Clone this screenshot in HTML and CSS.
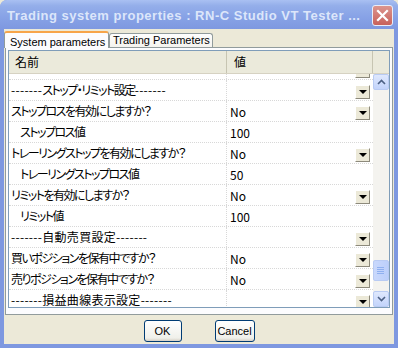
FILE: index.html
```html
<!DOCTYPE html>
<html lang="ja">
<head>
    <meta charset="UTF-8">
    <title>Trading system properties</title>
    <link rel="stylesheet" href="styles.css">
</head>
<body>
    <div class="window">
        <div class="titlebar">
            <span class="title">Trading system properties : RN-C Studio VT Tester ...</span>
            <span class="close">
                <svg width="13" height="13" viewBox="0 0 13 13"><path d="M2 2 L11 11 M11 2 L2 11" stroke="#fff" stroke-width="2.2" stroke-linecap="square"/></svg>
            </span>
        </div>
        <div class="client">
            <div class="tabs">
                <div class="tab active">System parameters</div>
                <div class="tab">Trading Parameters</div>
            </div>
            <div class="panel">
                <div class="grid">
                    <div class="head">
                        <div class="hcell name">名前</div>
                        <div class="hcell val">値</div>
                        <div class="hcell rest"></div>
                    </div>
                    <div class="gbody">
                        <div class="viewport">
                            <div class="rows">
                                <div class="row"><div class="cell name"></div><div class="cell val"><span class="drop"></span></div></div>
                                <div class="row"><div class="cell name"><span class="dash">-------</span>ストップ・リミット設定<span class="dash">-------</span></div><div class="cell val"><span class="drop"></span></div></div>
                                <div class="row"><div class="cell name">ストップロスを有効にしますか？</div><div class="cell val">No<span class="drop"></span></div></div>
                                <div class="row"><div class="cell name sub">ストップロス値</div><div class="cell val">100</div></div>
                                <div class="row"><div class="cell name">トレーリングストップを有効にしますか？</div><div class="cell val">No<span class="drop"></span></div></div>
                                <div class="row"><div class="cell name sub">トレーリングストップロス値</div><div class="cell val">50</div></div>
                                <div class="row"><div class="cell name">リミットを有効にしますか？</div><div class="cell val">No<span class="drop"></span></div></div>
                                <div class="row"><div class="cell name sub">リミット値</div><div class="cell val">100</div></div>
                                <div class="row"><div class="cell name"><span class="dash">-------</span><span class="kanji">自動売買設定</span><span class="dash">-------</span></div><div class="cell val"><span class="drop"></span></div></div>
                                <div class="row"><div class="cell name">買いポジションを保有中ですか？</div><div class="cell val">No<span class="drop"></span></div></div>
                                <div class="row"><div class="cell name">売りポジションを保有中ですか？</div><div class="cell val">No<span class="drop"></span></div></div>
                                <div class="row"><div class="cell name"><span class="dash">-------</span><span class="kanji">損益曲線表示設定</span><span class="dash">-------</span></div><div class="cell val"><span class="drop"></span></div></div>
                            </div>
                        </div>
                        <div class="scrollbar">
                            <div class="sbtn">
                                <svg width="9" height="6" viewBox="0 0 9 6"><path d="M1 5 L4.5 1.5 L8 5" fill="none" stroke="#4d6185" stroke-width="1.6"/></svg>
                            </div>
                            <div class="track">
                                <div class="thumb">
                                    <svg width="8" height="7" viewBox="0 0 8 7"><path d="M0 0.5 H7 M0 2.5 H7 M0 4.5 H7 M0 6.5 H7" stroke="#8fb0f0" stroke-width="1"/></svg>
                                </div>
                            </div>
                            <div class="sbtn">
                                <svg width="9" height="6" viewBox="0 0 9 6"><path d="M1 1 L4.5 4.5 L8 1" fill="none" stroke="#4d6185" stroke-width="1.6"/></svg>
                            </div>
                        </div>
                    </div>
                </div>
            </div>
            <div class="buttons">
                <button class="btn ok">OK</button>
                <button class="btn cancel">Cancel</button>
            </div>
        </div>
    </div>
</body>
</html>
```

FILE: styles.css
```css
body {
    margin: 0;
    width: 398px;
    height: 348px;
    overflow: hidden;
    background: #ece9d8;
    font-family: "Liberation Sans", Arial, sans-serif;
}

.window {
    width: 398px;
    height: 348px;
    display: flex;
    flex-direction: column;
    box-sizing: border-box;
    background: #7e98e0;
    border-radius: 7px 7px 0 0;
    overflow: hidden;
}

.titlebar {
    height: 29px;
    flex: none;
    display: flex;
    align-items: center;
    justify-content: space-between;
    padding: 0 5px 0 7px;
    background: linear-gradient(#a9c0f2 0%, #94aeea 20%, #87a2e6 60%, #7e98e0 100%);
}

.title {
    color: #dce6fa;
    font-weight: bold;
    font-size: 13px;
    letter-spacing: 0.5px;
    white-space: nowrap;
    margin-top: 1px;
}

.close {
    width: 19px;
    height: 19px;
    display: flex;
    align-items: center;
    justify-content: center;
    background: linear-gradient(#dc958e, #c8625b);
    border: 1px solid #e9eef9;
    border-radius: 3px;
    margin-top: 2px;
}

.client {
    flex: 1;
    margin: 0 4px 4px 4px;
    background: #ece9d8;
    display: flex;
    flex-direction: column;
}

.tabs {
    display: flex;
    align-items: flex-end;
    height: 17px;
    margin-top: 1px;
    position: relative;
    z-index: 1;
}

.tab {
    font-size: 11px;
    color: #000;
    height: 13px;
    line-height: 13px;
    padding: 0 2px 0 3px;
    border: 1px solid #919b9c;
    border-bottom: none;
    border-radius: 3px 3px 0 0;
    background: linear-gradient(#fefefe, #f4f3ee);
    white-space: nowrap;
}

.tab.active {
    height: 15px;
    line-height: 18px;
    padding: 0 6px 0 5px;
    width: 92px;
    background: #fcfcfe;
    border-top: 2px solid #f7a54a;
    margin-bottom: -1px;
}

.panel {
    height: 262px;
    margin: 0 1px;
    border: 1px solid #919b9c;
    background: #fcfcfe;
    padding: 2px;
}

.grid {
    border: 1px solid #7f9db9;
    height: 258px;
    box-sizing: border-box;
    display: flex;
    flex-direction: column;
    background: #fff;
}

.head {
    display: flex;
    height: 23px;
    flex: none;
    background: #ebeadb;
    border-bottom: 1px solid #d6d2c2;
    box-sizing: border-box;
}

.hcell {
    font-family: "Noto Sans CJK JP", sans-serif;
    font-size: 12px;
    line-height: 22px;
    box-sizing: border-box;
    border-right: 1px solid #c7c5b2;
}

.hcell.name {
    width: 218px;
    padding-left: 6px;
}

.hcell.val {
    width: 146px;
    padding-left: 7px;
}

.hcell.rest {
    flex: 1;
    border-right: none;
}

.gbody {
    flex: 1;
    display: flex;
    min-height: 0;
}

.viewport {
    flex: 1;
    overflow: hidden;
}

.rows {
    margin-top: -15px;
}

.row {
    display: flex;
    height: 21px;
    box-sizing: border-box;
    border-bottom: 1px dotted #d8d8d8;
}

.cell {
    font-family: "Noto Sans CJK JP", sans-serif;
    font-feature-settings: "palt";
    font-size: 12px;
    line-height: 19px;
    color: #000;
    white-space: nowrap;
    box-sizing: border-box;
}

.cell.name {
    width: 218px;
    padding-left: 2px;
    letter-spacing: -1.5px;
    border-right: 1px dotted #d8d8d8;
    overflow: hidden;
}

.cell.name.sub {
    padding-left: 11px;
}

.dash {
    letter-spacing: 0.3px;
}

.kanji {
    letter-spacing: 0.3px;
}

.cell.val {
    flex: 1;
    padding-left: 3px;
    display: flex;
    align-items: center;
    justify-content: space-between;
}

.drop {
    width: 15px;
    height: 14px;
    margin: 3px 3px 0 auto;
    box-sizing: border-box;
    border: 1px solid #fff;
    border-right-color: #8d8a7c;
    border-bottom-color: #8d8a7c;
    background: #ece9d8;
    display: flex;
    align-items: center;
    justify-content: center;
}

.drop::after {
    content: '';
    border-left: 4px solid transparent;
    border-right: 4px solid transparent;
    border-top: 4px solid #000;
    margin-top: 1px;
}

.scrollbar {
    width: 16px;
    flex: none;
    display: flex;
    flex-direction: column;
    background: #f4f3ef;
}

.sbtn {
    height: 16px;
    flex: none;
    box-sizing: border-box;
    border: 1px solid #b9cbf3;
    border-radius: 2px;
    background: linear-gradient(#dfe8fd, #c3d4fb);
    display: flex;
    align-items: center;
    justify-content: center;
}

.track {
    flex: 1;
    display: flex;
    flex-direction: column;
    justify-content: flex-end;
    padding-bottom: 10px;
}

.thumb {
    height: 21px;
    box-sizing: border-box;
    border: 1px solid #b9cbf3;
    border-radius: 2px;
    background: linear-gradient(90deg, #c9d8fc, #bccffb);
    display: flex;
    align-items: center;
    justify-content: center;
}

.buttons {
    display: flex;
    justify-content: center;
    gap: 33px;
    padding-top: 5px;
}

.btn {
    height: 22px;
    padding: 0;
    font-family: "Liberation Sans", Arial, sans-serif;
    font-size: 11px;
    color: #000;
    border: 1px solid #003c74;
    border-radius: 3px;
    background: linear-gradient(#ffffff, #f0f0ea 85%, #d6d0c5);
}

.btn.ok {
    width: 38px;
}

.btn.cancel {
    width: 40px;
}
```
